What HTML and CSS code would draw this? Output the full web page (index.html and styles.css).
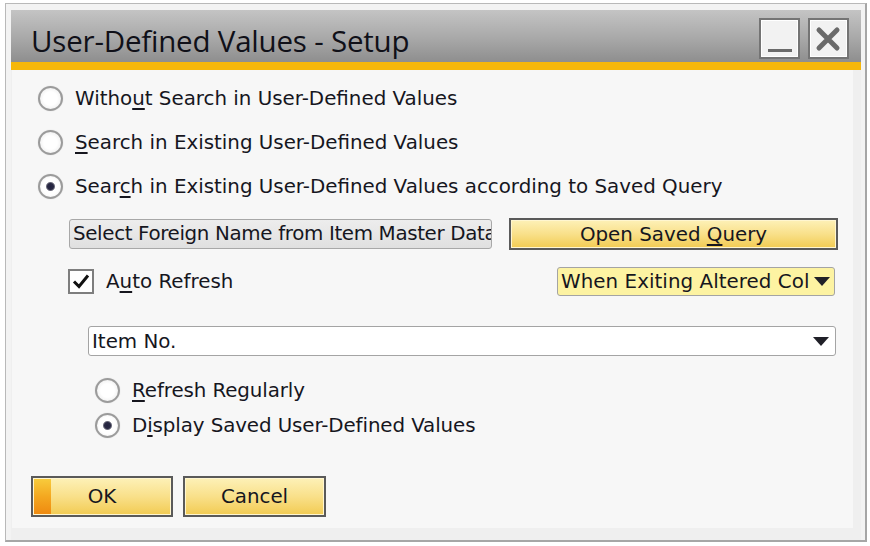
FILE: index.html
```html
<!DOCTYPE html>
<html>
<head>
<meta charset="utf-8">
<link rel="stylesheet" href="styles.css">
</head>
<body>
<div class="window">
  <div class="titlebar">
    <div class="title">User-Defined Values - Setup</div>
    <div class="tbtns">
      <div class="tbtn"><svg width="37" height="37" viewBox="0 0 37 37"><rect x="7" y="29" width="24" height="3" fill="#6a6a6a"/></svg></div>
      <div class="tbtn"><svg width="36" height="37" viewBox="0 0 36 37"><path d="M9 10 L27 28 M27 10 L9 28" stroke="#6a6a6a" stroke-width="5" stroke-linecap="round"/></svg></div>
    </div>
  </div>
  <div class="accent"></div>
  <div class="frame">
    <div class="panel">
      <div class="radio-row"><span class="radio"></span><span class="label">Witho<u>u</u>t Search in User-Defined Values</span></div>
      <div class="radio-row"><span class="radio"></span><span class="label"><u>S</u>earch in Existing User-Defined Values</span></div>
      <div class="radio-row"><span class="radio checked"></span><span class="label">Sear<u>c</u>h in Existing User-Defined Values according to Saved Query</span></div>

      <div class="query-row">
        <div class="query-field"><span class="field-text">Select Foreign Name from Item Master Data</span></div>
        <div class="btn query-btn"><span class="btn-text">Open Saved <u>Q</u>uery</span></div>
      </div>

      <div class="refresh-row">
        <span class="checkbox"><svg width="22" height="21" viewBox="0 0 22 21"><path d="M4 10.5 L9 15.5 L18 4.5" fill="none" stroke="#111" stroke-width="3"/></svg></span>
        <span class="label">A<u>u</u>to Refresh</span>
        <div class="combo yellow"><span class="combo-text">When Exiting Altered Col</span><span class="tri"></span></div>
      </div>

      <div class="combo white item-combo"><span class="combo-text">Item No.</span><span class="tri"></span></div>

      <div class="sub-radios">
        <div class="radio-row sub"><span class="radio"></span><span class="label"><u>R</u>efresh Regularly</span></div>
        <div class="radio-row sub"><span class="radio checked"></span><span class="label">D<u>i</u>splay Saved User-Defined Values</span></div>
      </div>

      <div class="actions">
        <div class="btn action ok"><span class="stripe"></span><span class="btn-text">OK</span></div>
        <div class="btn action"><span class="btn-text">Cancel</span></div>
      </div>
    </div>
  </div>
</div>
</body>
</html>
```
FILE: styles.css
```css
html, body {
  margin: 0;
  padding: 0;
  background: #ffffff;
}
body {
  font-family: "DejaVu Sans", sans-serif;
  font-size: 19.85px;
  color: #16161e;
}
.window {
  margin: 3px 0 0 5px;
  width: 862px;
  height: 539px;
  box-sizing: border-box;
  border: 1px solid #b9b9b9;
  border-right: 2px solid #a6a6a6;
  border-bottom: 2px solid #a6a6a6;
  background: #f3f3f3;
  padding: 6px 4px 0 5px;
  display: flex;
  flex-direction: column;
}
.titlebar {
  height: 52px;
  flex: none;
  background: linear-gradient(#c4c4c4, #a8a8a8 55%, #8e8e8e);
  display: flex;
  align-items: center;
  justify-content: space-between;
  padding-left: 20px;
  padding-right: 12px;
}
.title {
  font-family: "Open Sans", "Liberation Sans", sans-serif;
  font-size: 29.5px;
  color: #101018;
  padding-top: 8px;
  letter-spacing: -0.2px;
}
.tbtns {
  display: flex;
  gap: 8px;
  margin-top: 5px;
}
.tbtn {
  width: 37px;
  height: 37px;
  border: 2px solid #747474;
  background: #f2f2f2;
  box-shadow: inset 0 0 0 1px #ffffff;
  display: flex;
}
.accent {
  height: 8px;
  flex: none;
  background: #f6b70a;
}
.frame {
  flex: 1;
  background: #efefef;
  padding: 0 8px 12px 1px;
  display: flex;
}
.panel {
  flex: 1;
  background: #f7f7f7;
  padding: 6px 0 0 19px;
  display: flex;
  flex-direction: column;
}
.radio-row {
  height: 44px;
  display: flex;
  align-items: center;
  margin-left: 7px;
  gap: 12px;
}
.radio {
  width: 21px;
  height: 21px;
  flex: none;
  border-radius: 50%;
  border: 2px solid #9b9b9b;
  background: radial-gradient(circle, #ffffff 45%, #e6e6e6 100%);
  box-shadow: 0 0 1px #c8c8c8;
}
.radio.checked {
  background: radial-gradient(circle, #232340 0, #2a2a44 3px, #6a6a7a 4px, #ffffff 5px, #ffffff 55%, #e6e6e6 100%);
}
.label {
  white-space: nowrap;
}
u {
  text-decoration-thickness: 1.5px;
  text-underline-offset: 3px;
}
.query-row {
  display: flex;
  align-items: center;
  margin-top: 10px;
  margin-left: 38px;
  height: 32px;
  gap: 17px;
}
.query-field {
  width: 423px;
  height: 30px;
  box-sizing: border-box;
  border: 1px solid #a8a8a8;
  border-radius: 3px;
  background: linear-gradient(#ededed, #e0e0e0);
  padding-left: 3px;
  line-height: 28px;
  overflow: hidden;
  white-space: nowrap;
}
.field-text {
  letter-spacing: -0.35px;
}
.btn {
  box-sizing: border-box;
  border: 2px solid #5a5a5a;
  background: linear-gradient(#fdf1b8, #f9e08a 50%, #f2cb52);
  box-shadow: inset 0 0 0 1px #fff6d0;
  display: flex;
  align-items: center;
  justify-content: center;
}
.query-btn {
  width: 329px;
  height: 32px;
}
.refresh-row {
  display: flex;
  align-items: center;
  margin-top: 17px;
  margin-left: 37px;
  height: 29px;
  width: 767px;
}
.checkbox {
  width: 26px;
  height: 25px;
  box-sizing: border-box;
  border: 2px solid #7e7e7e;
  background: #ffffff;
  display: flex;
  align-items: center;
  justify-content: center;
  margin-right: 12px;
}
.combo {
  box-sizing: border-box;
  border: 1px solid #a4a4a4;
  border-radius: 3px;
  display: flex;
  align-items: center;
  padding-left: 3px;
  overflow: hidden;
}
.combo-text {
  flex: 1;
  white-space: nowrap;
}
.tri {
  flex: none;
  width: 0;
  height: 0;
  border-left: 8px solid transparent;
  border-right: 8px solid transparent;
  border-top: 9px solid #202028;
  margin: 0 6px 0 0;
}
.combo.yellow {
  margin-left: auto;
  width: 278px;
  height: 29px;
  background: #fdf3a2;
}
.combo.yellow .combo-text {
  letter-spacing: 0.05px;
}
.combo.yellow .tri {
  margin-right: 4px;
}
.combo.white {
  background: #ffffff;
}
.item-combo {
  margin-top: 30px;
  margin-left: 57px;
  width: 748px;
  height: 30px;
}
.sub-radios {
  margin-top: 17px;
  margin-left: 57px;
}
.radio-row.sub {
  height: 35px;
  gap: 12px;
}
.sub .label {
  letter-spacing: -0.1px;
}
.actions {
  display: flex;
  gap: 10px;
  margin-top: 33px;
}
.action {
  width: 142px;
  height: 41px;
  position: relative;
}
.action + .action {
  width: 143px;
}
.stripe {
  position: absolute;
  left: 1px;
  top: 1px;
  bottom: 1px;
  width: 17px;
  background: linear-gradient(#f8cb3c, #f4a820 50%, #ef8a10);
}
.btn-text {
  position: relative;
  white-space: nowrap;
}
```
